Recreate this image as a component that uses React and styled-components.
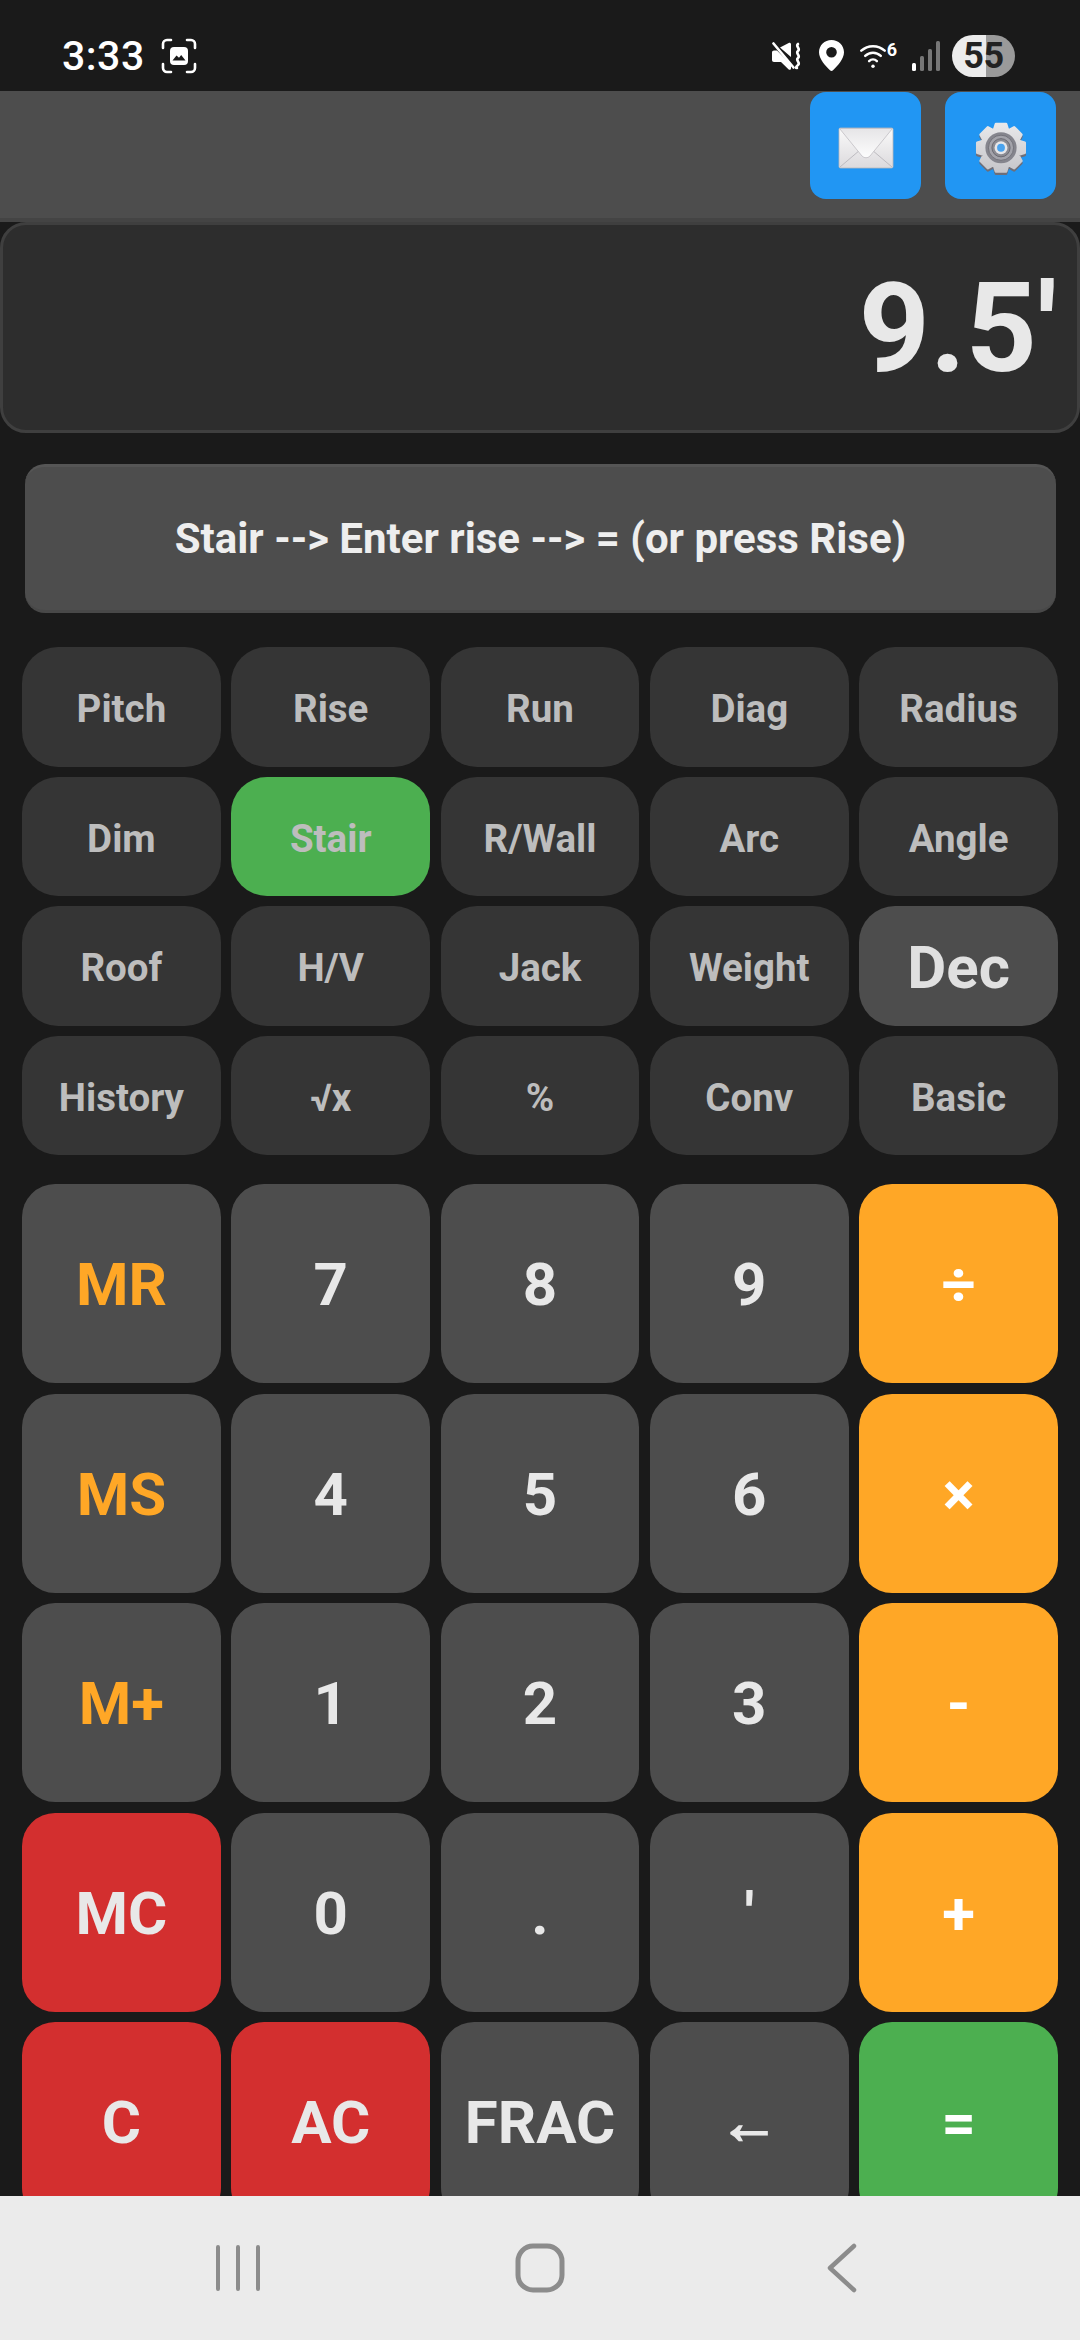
import React from 'react';
import styled, { createGlobalStyle, css } from 'styled-components';

const GlobalStyle = createGlobalStyle`
  html, body {
    margin: 0;
    padding: 0;
    background: #1a1a1a;
  }
  * {
    box-sizing: border-box;
  }
`;

const Screen = styled.div`
  width: 1080px;
  height: 2340px;
  display: flex;
  flex-direction: column;
  overflow: hidden;
  background: #1a1a1a;
  font-family: Roboto, "Liberation Sans", sans-serif;
`;

const StatusBar = styled.div`
  height: 91px;
  flex: none;
  display: flex;
  justify-content: space-between;
  align-items: center;
  padding: 20px 65px 0 62px;
  color: #fff;
`;

const StatusGroup = styled.div`
  display: flex;
  align-items: center;
`;

const Time = styled.span`
  font-size: 41px;
  font-weight: 500;
  letter-spacing: 0.5px;
  margin-right: 16px;
`;

const WifiWrap = styled.span`
  display: flex;
  align-items: flex-start;
  gap: 1px;
  margin: 0 15px 0 16px;
  height: 27px;
  font-size: 18px;
  font-weight: 700;
  line-height: 16px;
`;

const Battery = styled.span`
  width: 63px;
  height: 42px;
  margin-left: 12px;
  border-radius: 21px;
  background: linear-gradient(90deg, #ececec 0 54%, #9a9a9a 54% 100%);
  color: #222;
  font-size: 36px;
  font-weight: 700;
  line-height: 42px;
  text-align: center;
  letter-spacing: -0.5px;
`;

const Header = styled.div`
  height: 131px;
  flex: none;
  display: flex;
  justify-content: flex-end;
  gap: 24px;
  padding: 1px 24px 0 0;
  background: #4d4d4d;
  border-bottom: 4px solid #444;
`;

const IconButton = styled.button`
  width: 111px;
  height: 107px;
  display: flex;
  align-items: center;
  justify-content: center;
  padding: 5px 0 0;
  border: none;
  border-radius: 16px;
  background: #2196f3;
`;

const Display = styled.div`
  height: 211px;
  flex: none;
  display: flex;
  align-items: center;
  justify-content: flex-end;
  padding: 2px 20px 0 0;
  background: #2d2d2d;
  border: 3px solid #3f3f3f;
  border-radius: 26px;
  color: #e8e8e8;
  font-size: 124px;
  font-weight: 700;
`;

const Message = styled.div`
  height: 149px;
  flex: none;
  display: flex;
  align-items: center;
  justify-content: center;
  margin: 31px 24px 0 25px;
  background: #4d4d4d;
  border-top: 3px solid #555;
  border-bottom: 3px solid #484848;
  border-radius: 20px;
  color: #eee;
  font-size: 42px;
  font-weight: 700;
`;

const Content = styled.div`
  flex: 1;
  min-height: 0;
  overflow: hidden;
  padding: 34px 22px 0;
`;

const FnGrid = styled.div`
  display: grid;
  grid-template-columns: repeat(5, 1fr);
  grid-auto-rows: 119.5px;
  gap: 10px 10.5px;
`;

const FnKey = styled.button`
  display: flex;
  align-items: center;
  justify-content: center;
  padding: 4px 0 0;
  border: none;
  border-radius: 36px;
  background: #353535;
  color: #bdbdbd;
  font-family: inherit;
  font-size: 38.5px;
  font-weight: 700;
  ${(props) => props.$active && css`
    background: #4caf50;
  `}
  ${(props) => props.$big && css`
    background: #4d4d4d;
    color: #e0e0e0;
    font-size: 60px;
  `}
`;

const KeyGrid = styled.div`
  display: grid;
  grid-template-columns: repeat(5, 1fr);
  grid-auto-rows: 199px;
  gap: 10.6px 10.5px;
  margin-top: 29px;
`;

const keyColors = {
  num: css`background: #4d4d4d; color: #e8e8e8;`,
  mem: css`background: #4d4d4d; color: #ffa726;`,
  red: css`background: #d32f2f; color: #e8e8e8;`,
  op: css`background: #ffa726; color: #fff;`,
  eq: css`background: #4caf50; color: #fff;`,
  arrow: css`background: #4d4d4d; color: #e8e8e8; -webkit-text-stroke: 2px #e8e8e8;`,
};

const Key = styled.button`
  display: flex;
  align-items: center;
  justify-content: center;
  padding: 2px 0 0;
  border: none;
  border-radius: 33px;
  font-family: inherit;
  font-size: 60px;
  font-weight: 700;
  ${(props) => keyColors[props.$kind]}
`;

const NavBar = styled.div`
  height: 144px;
  flex: none;
  display: grid;
  grid-template-columns: repeat(3, 1fr);
  align-items: center;
  justify-items: center;
  padding: 0 87px;
  background: #ebebeb;
`;

const fnKeys = [
  'Pitch', 'Rise', 'Run', 'Diag', 'Radius',
  'Dim', 'Stair', 'R/Wall', 'Arc', 'Angle',
  'Roof', 'H/V', 'Jack', 'Weight', 'Dec',
  'History', '√x', '%', 'Conv', 'Basic',
];

const mainKeys = [
  ['MR', 'mem'], ['7', 'num'], ['8', 'num'], ['9', 'num'], ['÷', 'op'],
  ['MS', 'mem'], ['4', 'num'], ['5', 'num'], ['6', 'num'], ['×', 'op'],
  ['M+', 'mem'], ['1', 'num'], ['2', 'num'], ['3', 'num'], ['-', 'op'],
  ['MC', 'red'], ['0', 'num'], ['.', 'num'], ["'", 'num'], ['+', 'op'],
  ['C', 'red'], ['AC', 'red'], ['FRAC', 'num'], ['←', 'arrow'], ['=', 'eq'],
];

// 8 toothed gear outline, centred on 0,0
const gearPath = (() => {
  const outer = 28;
  const root = 21.5;
  const pts = [];
  for (let i = 0; i < 8; i++) {
    const a = (i * Math.PI) / 4 - Math.PI / 2;
    const step = Math.PI / 4;
    [[root, -0.5], [outer, -0.27], [outer, 0.27], [root, 0.5]].forEach(([r, t]) => {
      const ang = a + t * step;
      pts.push(`${(r * Math.cos(ang)).toFixed(2)} ${(r * Math.sin(ang)).toFixed(2)}`);
    });
  }
  return `M${pts.join('L')}Z`;
})();

const ScreenshotIcon = () => (
  <svg width="36" height="36" viewBox="0 0 36 36" fill="none">
    <path d="M2 10V6a4 4 0 0 1 4-4h4M26 2h4a4 4 0 0 1 4 4v4M34 26v4a4 4 0 0 1-4 4h-4M10 34H6a4 4 0 0 1-4-4v-4" stroke="#fff" strokeWidth="2.6" strokeLinecap="round" />
    <rect x="9" y="9" width="18" height="18" rx="4" fill="#fff" />
    <path d="M11.5 22.5l4-5 2.5 2.2 2.2-2.7 4.3 5.5z" fill="#1a1a1a" />
  </svg>
);

const MuteIcon = () => (
  <svg width="30" height="28" viewBox="0 0 30 28">
    <path d="M0 10.5c0-1.2.8-2 2-2h3l14 14v4c0 1.2-1.4 1.8-2.3 1L9 20H2c-1.2 0-2-.8-2-2z" fill="#fff" />
    <path d="M8 5.5L16.7.9c.9-.6 2.3 0 2.3 1.2v13z" fill="#fff" />
    <path d="M1.5 1.5l20 24" stroke="#fff" strokeWidth="2.6" strokeLinecap="round" />
    <path d="M26 2c-3 2.5 3 4.5 0 7s3 4.5 0 7 3 4.5 0 7-2 3-1 3" fill="none" stroke="#fff" strokeWidth="2.6" strokeLinecap="round" />
  </svg>
);

const PinIcon = () => (
  <svg width="25" height="31" viewBox="0 0 25 31" style={{ marginLeft: 17 }}>
    <path fillRule="evenodd" d="M12.5 0C19.4 0 25 5.4 25 12.2c0 6.8-6.5 13.6-11 18.100-.8.9-2.2.9-3 0C6.5 25.8 0 19 0 12.2 0 5.4 5.6 0 12.5 0zm0 7a5.3 5.3 0 1 0 0 10.6 5.3 5.3 0 0 0 0-10.6z" fill="#fff" />
  </svg>
);

const WifiIcon = () => (
  <svg width="26" height="27" viewBox="0 0 30 31" fill="none" stroke="#fff" strokeLinecap="round" strokeWidth="2.8">
    <path d="M1.5 10C9 3 21 3 28.500 10" />
    <path d="M6 16c5.200-5 12.800-5 18 0" />
    <path d="M10.500 22c2.600-2.500 6.400-2.500 9 0" />
    <circle cx="15" cy="28" r="2" fill="#fff" stroke="none" />
  </svg>
);

const SignalIcon = () => (
  <svg width="28" height="30" viewBox="0 0 28 30">
    <rect x="0" y="22" width="4" height="8" rx="1.5" fill="#fff" />
    <rect x="8" y="15" width="4" height="15" rx="1.5" fill="#777" />
    <rect x="16" y="8" width="4" height="22" rx="1.5" fill="#777" />
    <rect x="24" y="0" width="4" height="30" rx="1.5" fill="#777" />
  </svg>
);

const MailIcon = () => (
  <svg width="56" height="42" viewBox="0 0 56 42">
    <defs>
      <linearGradient id="mailBody" x1="0" y1="0" x2="0" y2="1">
        <stop offset="0" stopColor="#fafafa" />
        <stop offset="1" stopColor="#dcdadd" />
      </linearGradient>
      <linearGradient id="mailFlap" x1="0" y1="0" x2="0" y2="1">
        <stop offset="0" stopColor="#e6e5e7" />
        <stop offset="1" stopColor="#fdfdfd" />
      </linearGradient>
    </defs>
    <rect x="1" y="1" width="54" height="40" rx="1.5" fill="url(#mailBody)" stroke="#b9b7bb" strokeWidth="0.8" />
    <path d="M2 40l20-17M54 40L34 23" stroke="#bdbbc0" strokeWidth="1" />
    <path d="M1.5 1.5h53L32 29c-2.2 2.3-5.8 2.3-8 0z" fill="url(#mailFlap)" stroke="#c0bec3" strokeWidth="0.8" />
  </svg>
);

const GearIcon = () => (
  <svg width="52" height="55.5" viewBox="-30 -32 60 64">
    <defs>
      <linearGradient id="gearFace" x1="0" y1="0" x2="0" y2="1">
        <stop offset="0" stopColor="#e8e8ea" />
        <stop offset="1" stopColor="#c6c6ca" />
      </linearGradient>
    </defs>
    <path d={gearPath} fill="#6e6e78" stroke="#6e6e78" strokeWidth="3" strokeLinejoin="round" transform="translate(0 2.5)" />
    <path d={gearPath} fill="url(#gearFace)" stroke="url(#gearFace)" strokeWidth="3" strokeLinejoin="round" />
    <circle r="18" fill="#85858d" />
    <circle r="14.5" fill="#a3a3aa" stroke="#6d6d75" strokeWidth="1" />
    <circle r="10.5" fill="#8b8b92" stroke="#64646c" strokeWidth="1" />
    <circle r="7.5" fill="#e6e6e8" />
    <circle r="4.5" fill="#4aa3ee" />
  </svg>
);

const RecentsIcon = () => (
  <svg width="44" height="48" viewBox="0 0 44 48" stroke="#8c8c8c" strokeWidth="4" strokeLinecap="round">
    <path d="M2 3v42M22 3v42M42 3v42" />
  </svg>
);

const HomeIcon = () => (
  <svg width="50" height="50" viewBox="0 0 50 50" fill="none">
    <rect x="3" y="3" width="44" height="44" rx="15" stroke="#8c8c8c" strokeWidth="5" />
  </svg>
);

const BackIcon = () => (
  <svg width="30" height="50" viewBox="0 0 30 50" fill="none">
    <path d="M27 3L3 25l24 22" stroke="#8c8c8c" strokeWidth="4.5" strokeLinecap="round" strokeLinejoin="round" />
  </svg>
);

const App = () => {
  return (
    <Screen>
      <GlobalStyle />
      <StatusBar>
        <StatusGroup>
          <Time>3:33</Time>
          <ScreenshotIcon />
        </StatusGroup>
        <StatusGroup>
          <MuteIcon />
          <PinIcon />
          <WifiWrap>
            <WifiIcon />
            <span>6</span>
          </WifiWrap>
          <SignalIcon />
          <Battery>55</Battery>
        </StatusGroup>
      </StatusBar>
      <Header>
        <IconButton><MailIcon /></IconButton>
        <IconButton><GearIcon /></IconButton>
      </Header>
      <Display>9.5'</Display>
      <Message>Stair --&gt; Enter rise --&gt; = (or press Rise)</Message>
      <Content>
        <FnGrid>
          {fnKeys.map((label) => (
            <FnKey key={label} $active={label === 'Stair'} $big={label === 'Dec'}>{label}</FnKey>
          ))}
        </FnGrid>
        <KeyGrid>
          {mainKeys.map(([label, kind]) => (
            <Key key={label} $kind={kind}>{label}</Key>
          ))}
        </KeyGrid>
      </Content>
      <NavBar>
        <RecentsIcon />
        <HomeIcon />
        <BackIcon />
      </NavBar>
    </Screen>
  );
};

export default App;
